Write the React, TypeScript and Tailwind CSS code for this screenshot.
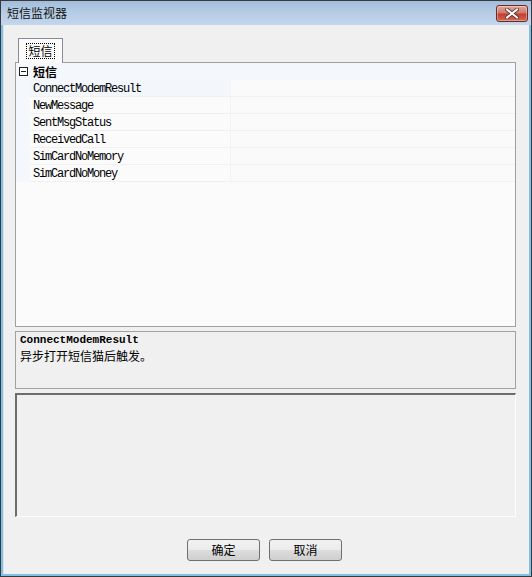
import React from 'react'

const events = [
  'ConnectModemResult',
  'NewMessage',
  'SentMsgStatus',
  'ReceivedCall',
  'SimCardNoMemory',
  'SimCardNoMoney',
]

const cjk = "font-['Noto_Sans_CJK_SC',sans-serif]"
const mono = "font-['Liberation_Mono','Noto_Sans_CJK_SC',monospace]"

function CloseButton() {
  return (
    <div className="w-[32px] h-[17px] rounded-[3px] border border-[#6e2a22] bg-[linear-gradient(#e3a99c,#d2776a_45%,#c0402f_55%,#d06a55)] flex items-center justify-center shadow-[inset_0_0_0_1px_rgba(255,255,255,0.35)]">
      <svg width="14" height="11" viewBox="0 0 14 11">
        <path d="M2 1.5 L12 9.5 M12 1.5 L2 9.5" stroke="#5a2a26" strokeWidth="3.6" strokeLinecap="square" />
        <path d="M2 1.5 L12 9.5 M12 1.5 L2 9.5" stroke="#ffffff" strokeWidth="2" strokeLinecap="square" />
      </svg>
    </div>
  )
}

function Button({ label }: { label: string }) {
  return (
    <button className={`w-[73px] h-[22px] rounded-[3px] border border-[#707070] bg-[linear-gradient(#f2f2f2,#ebebeb_50%,#dddddd_50%,#cfcfcf)] text-[12px] text-black leading-none ${cjk}`}>
      {label}
    </button>
  )
}

export default function App() {
  return (
    <div className="w-[532px] h-[577px] flex flex-col border border-[#3a3a3a] bg-[#7ec0e8]">
      {/* title bar */}
      <div className="h-[24px] flex items-center justify-between pl-[6px] pr-[3px] bg-[linear-gradient(#a2bddc,#b7cde6_50%,#c2d6ec)]">
        <span className={`text-[12px] text-[#111] ${cjk}`}>短信监视器</span>
        <CloseButton />
      </div>

      {/* client area */}
      <div className="flex-1 mx-[2px] mb-[2px] bg-[#f0f0f0] border-l border-[#d6e4f0] flex flex-col pt-[13px] pl-[11px] pr-[13px]">
        {/* tab */}
        <div className="flex">
          <div className="ml-[3px] w-[45px] h-[25px] -mb-px relative z-10 border border-b-0 border-[#898c95] bg-[#fbfbfb] flex items-center justify-center">
            <span className={`px-[1px] h-[16px] flex items-center border border-dotted border-black text-[12px] leading-none ${cjk}`}>短信</span>
          </div>
        </div>

        {/* property grid */}
        <div className="h-[265px] border border-[#a0a0a0] bg-[#fbfbfb] flex flex-col">
          <div className="h-[17px] flex items-center bg-[#f4f7fc]">
            <div className="w-[14px] flex justify-center pl-[1px]">
              <svg width="9" height="9" viewBox="0 0 9 9">
                <rect x="0.5" y="0.5" width="8" height="8" fill="#fff" stroke="#222" />
                <path d="M2 4.5 H7" stroke="#222" />
              </svg>
            </div>
            <span className={`pl-[3px] text-[12px] font-bold text-black leading-none ${cjk}`}>短信</span>
          </div>
          {events.map((e, i) => (
            <div key={e} className="h-[17px] flex bg-[#f4f7fc]">
              <div className="w-[14px]" />
              <div
                className={`w-[200px] flex items-center pl-[3px] pt-[2px] border-b border-[#f0f0f0] ${
                  i === 0 ? 'bg-[#f3f7fc]' : 'bg-[#fbfbfb]'
                }`}
              >
                <span className={`text-[12px] tracking-[-1.2px] text-black leading-none ${mono}`}>{e}</span>
              </div>
              <div className="flex-1 border-l border-[#f3f3f6] border-b border-b-[#f0f0f0] bg-[#fafafa]" />
            </div>
          ))}
          <div className="flex-1" />
        </div>

        {/* description */}
        <div className="mt-[4px] h-[58px] border border-[#a0a0a0] bg-[#f0f0f0] pl-[4px] pt-[1px] flex flex-col">
          <span className={`text-[11px] font-bold text-black leading-[15px] ${mono}`}>ConnectModemResult</span>
          <span className={`text-[12px] text-black leading-[16px] ${cjk}`}>异步打开短信猫后触发。</span>
        </div>

        {/* output box */}
        <div className="mt-[4px] h-[124px] border-t-2 border-l-2 border-[#6d6d6d] border-r border-b border-r-[#fdfdfd] border-b-[#fdfdfd] bg-[#f0f0f0]" />

        {/* buttons */}
        <div className="mt-[22px] flex gap-[9px] pl-[172px]">
          <Button label="确定" />
          <Button label="取消" />
        </div>
      </div>
    </div>
  )
}
